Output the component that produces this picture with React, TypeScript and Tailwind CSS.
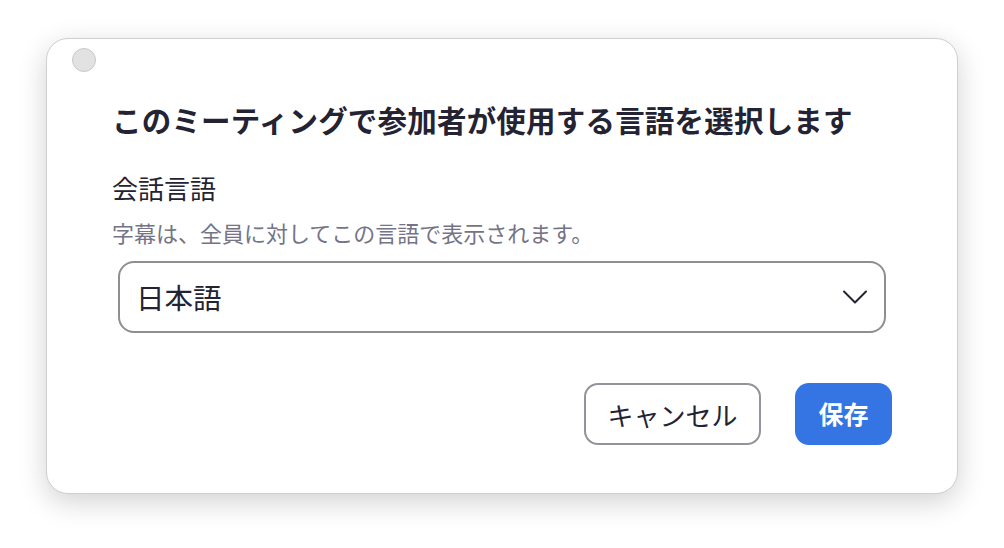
import React from 'react';

const font = { fontFamily: '"Noto Sans CJK JP", "Noto Sans", sans-serif' };

export default function App() {
  return (
    <div className="w-[1004px] h-[548px] bg-white pl-[46px] pt-[38px]" style={font}>
      <div className="w-[912px] h-[456px] rounded-[22px] border border-[#cfcfcf] bg-white shadow-[0_8px_28px_rgba(0,0,0,0.18)] flex flex-col">
        {/* traffic light */}
        <div className="pl-[25px] pt-[9px]">
          <div className="w-[24px] h-[24px] rounded-full bg-[#e2e2e2] border border-[#c9c9c9]" />
        </div>

        <div className="pl-[65px] pr-[65px] flex flex-col">
          <h1 className="mt-[27px] text-[29.5px] leading-[40px] font-bold text-[#232333] tracking-[0.2px]">
            このミーティングで参加者が使用する言語を選択します
          </h1>

          <div className="mt-[32px] text-[26px] leading-[34px] text-[#232333]">会話言語</div>
          <div className="mt-[12px] text-[22px] leading-[30px] text-[#747487]">
            字幕は、全員に対してこの言語で表示されます。
          </div>

          <button className="mt-[14px] ml-[6px] w-[768px] h-[72px] rounded-[16px] border-2 border-[#8e8e93] flex items-center justify-between pl-[16px] pr-[16px]">
            <span className="text-[28.5px] text-[#232333]">日本語</span>
            <svg width="26" height="16" viewBox="0 0 26 16" fill="none">
              <path d="M2 2.5 L13 13.5 L24 2.5" stroke="#232333" strokeWidth="2" strokeLinecap="round" strokeLinejoin="round" />
            </svg>
          </button>

          <div className="mt-[50px] flex justify-end gap-[34px]">
            <button className="w-[177px] h-[62px] rounded-[14px] border-2 border-[#939399] text-[26px] text-[#232333] flex items-center justify-center">
              キャンセル
            </button>
            <button className="w-[97px] h-[62px] rounded-[14px] bg-[#3574e3] text-[25px] font-bold text-white flex items-center justify-center">
              保存
            </button>
          </div>
        </div>
      </div>
    </div>
  );
}
